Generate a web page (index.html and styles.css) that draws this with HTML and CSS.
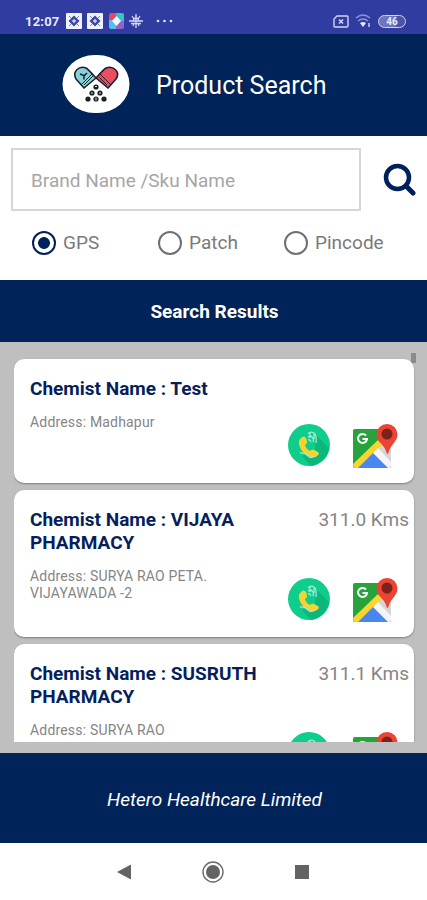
FILE: index.html
```html
<!DOCTYPE html>
<html lang="en">
<head>
    <meta charset="UTF-8">
    <meta name="viewport" content="width=device-width, initial-scale=1.0">
    <title>Product Search</title>
    <link rel="stylesheet" href="styles.css">
</head>
<body>
    <!-- shared icons -->
    <svg class="defs" width="0" height="0">
        <symbol id="app" viewBox="0 0 16 16">
            <rect width="16" height="16" rx="1" fill="#f1f2ff"/>
            <path d="M8 2.5L13.5 8L8 13.5L2.5 8Z" fill="#3a459f"/>
            <path d="M3 3l2 2M13 3l-2 2M3 13l2-2M13 13l-2-2" stroke="#7780c4"/>
            <path d="M8 5.5L9 7L10.5 8L9 9L8 10.5L7 9L5.5 8L7 7Z" fill="#cbd0f4"/>
        </symbol>
        <symbol id="call" viewBox="0 0 42 42">
            <circle cx="21" cy="21" r="21" fill="#0fce8b"/>
            <path d="M27 10L41 24A21 21 0 0 1 23 42L14 32L27 27Z" fill="#0cb77c"/>
            <path d="M13 14q3-3 5 0l1 4q0 2-2 3q1 4 5 6q2-2 4-1l4 2q2 2-1 4q-4 3-9 0q-8-5-9-12q-.5-4 2-6z" fill="#f8d32f"/>
            <path d="M20 10q2-3 6-1q3 2 2 10M20 13q3-2 5 1q1 2 0 4M20 16q2-1 3 2M22 9v5M26 10v5" fill="none" stroke="#a5eadb" stroke-width="1.3"/>
            <path d="M12 29q5-1 8 3q2 3 6 0" fill="none" stroke="#a5eadb" stroke-width="1.3"/>
        </symbol>
        <symbol id="map" viewBox="0 0 46 46">
            <path d="M3 6h36v39H3a2 2 0 0 1-2-2V8a2 2 0 0 1 2-2z" fill="#d5d5d8"/>
            <path d="M3 6h28l-3 13L2 45q-1-1-1-3V8q0-2 2-2z" fill="#27a33c"/>
            <path d="M26 17l4 5L6 45H3q-2-1-2-4z" fill="#fbd52d"/>
            <path d="M22 29L37 45H6z" fill="#4986ed"/>
            <path d="M26 25l13 14v4l-2 2h-1L21 30z" fill="#f5f5f6"/>
            <path d="M14 12.5a4.5 4.5 0 1 0 1 3.5h-4.5" fill="none" stroke="#fff" stroke-width="2"/>
            <path d="M35 1a10.500 10.500 0 0 1 10.500 10.500c0 7-7 10-9 18q-1 3-2 0c-2-8-10-11-10-18A10.500 10.500 0 0 1 35 1z" fill="#eb4435"/>
            <circle cx="35" cy="11" r="5.500" fill="#7c211d"/>
        </symbol>
    </svg>

    <div class="status">
        <span class="time">12:07</span>
        <svg width="16" height="16"><use href="#app"/></svg>
        <svg width="16" height="16"><use href="#app"/></svg>
        <svg width="15" height="16" viewBox="0 0 15 16">
            <path d="M2 0h6v8H0V2q0-2 2-2z" fill="#e9475d"/>
            <path d="M7 0h6q2 0 2 2v7H7z" fill="#32c7c0"/>
            <path d="M0 7h8v9H2q-2 0-2-2z" fill="#50c2e8"/>
            <path d="M7 8h8v6q0 2-2 2H7z" fill="#9361ce"/>
            <path d="M7.5 3l4.5 5-4.5 5L3 8z" fill="#f5f4ff"/>
        </svg>
        <svg width="14" height="14" viewBox="0 0 14 14" fill="none" stroke="#d5d8f5" stroke-width="1.3">
            <path d="M7 0v14M0 7h14M3 2l2 3M11 2l-2 3M4 12l1-3M10 12l-1-3M2 9.5h10"/>
            <path d="M4.500 7q0-3 2.500-3t2.500 3"/>
        </svg>
        <svg class="more" width="17" height="4" viewBox="0 0 17 4" fill="#dfe2ff">
            <circle cx="2" cy="2" r="1.3"/><circle cx="8.5" cy="2" r="1.3"/><circle cx="15" cy="2" r="1.3"/>
        </svg>
        <div class="status-right">
            <svg width="16" height="13" viewBox="0 0 16 13" fill="none" stroke="#cfd3f5" stroke-width="1.4">
                <path d="M4 1h10q1 0 1 1v9q0 1-1 1H2q-1 0-1-1V4z"/>
                <path d="M6 4.500l4 4M10 4.500l-4 4" stroke-width="1.700"/>
            </svg>
            <svg width="17" height="14" viewBox="0 0 17 14" fill="none">
                <path d="M1 4q7-6 14 0M3 7q5-4 10 0" stroke="#8d94d5" stroke-width="1.500"/>
                <path d="M5 9q3-2 6 0l-3 4z" fill="#e8eaff"/>
                <path d="M14 9v4" stroke="#cfd3f5" stroke-width="1.500"/>
            </svg>
            <span class="battery">46</span>
        </div>
    </div>

    <header class="header">
        <svg class="logo" width="68" height="60" viewBox="0 0 68 60">
            <rect x=".5" y="1" width="67" height="58" rx="32" ry="29" fill="#fff"/>
            <g stroke="#18202a" stroke-width="1.500">
                <path d="M22 34L14 25C10 18 17 11 24 14Q26 15 34 24z" fill="#86d2db"/>
                <path d="M46 34L54 25C59 18 51 11 44 14Q42 15 34 24z" fill="#ee4c60"/>
                <path d="M19 31l11-11M22 31l9-9M38 20l11 11M37 23l8 8" fill="none" stroke-width="1"/>
                <path d="M18 20l4 1.500v4M22 22l3-3" fill="none"/>
            </g>
            <g fill="#182028">
                <circle cx="34" cy="33" r="2.600"/><circle cx="30" cy="39" r="2.600"/><circle cx="38" cy="39" r="2.600"/>
                <circle cx="26" cy="45" r="2.600"/><circle cx="34" cy="45" r="2.600"/><circle cx="42" cy="45" r="2.600"/>
            </g>
            <path d="M33 32.500h2M29 39h2M37 39h2M34 43.500v3" stroke="#ddd"/>
        </svg>
        <h1 class="title">Product Search</h1>
    </header>

    <section class="search">
        <div class="search-row">
            <input class="search-input" type="text" placeholder="Brand Name /Sku Name">
            <svg width="33" height="33" viewBox="0 0 33 33" fill="none" stroke="#00205b">
                <circle cx="14.5" cy="14.5" r="11.5" stroke-width="4.5"/>
                <path d="M23 23l7 7" stroke-width="5" stroke-linecap="round"/>
            </svg>
        </div>
        <div class="radios">
            <label class="radio"><input type="radio" name="by" checked>GPS</label>
            <label class="radio"><input type="radio" name="by">Patch</label>
            <label class="radio"><input type="radio" name="by">Pincode</label>
        </div>
    </section>

    <h2 class="results-title">Search Results</h2>

    <main class="results">
        <div class="scrollbar"></div>
        <div class="list">
            <article class="card card-short">
                <div class="card-top">
                    <h3 class="name">Chemist Name : Test</h3>
                </div>
                <p class="address">Address: Madhapur</p>
                <div class="actions">
                    <svg class="call" width="42" height="42"><use href="#call"/></svg>
                    <svg width="46" height="46"><use href="#map"/></svg>
                </div>
            </article>
            <article class="card">
                <div class="card-top">
                    <h3 class="name">Chemist Name : VIJAYA<br>PHARMACY</h3>
                    <span class="distance">311.0 Kms</span>
                </div>
                <p class="address">Address: SURYA RAO PETA.<br>VIJAYAWADA -2</p>
                <div class="actions">
                    <svg class="call" width="42" height="42"><use href="#call"/></svg>
                    <svg width="46" height="46"><use href="#map"/></svg>
                </div>
            </article>
            <article class="card">
                <div class="card-top">
                    <h3 class="name">Chemist Name : SUSRUTH<br>PHARMACY</h3>
                    <span class="distance">311.1 Kms</span>
                </div>
                <p class="address">Address: SURYA RAO</p>
                <div class="actions">
                    <svg class="call" width="42" height="42"><use href="#call"/></svg>
                    <svg width="46" height="46"><use href="#map"/></svg>
                </div>
            </article>
        </div>
    </main>

    <footer class="footer">Hetero Healthcare Limited</footer>

    <nav class="nav">
        <svg width="14" height="16" viewBox="0 0 14 16"><path d="M14 .5v15L0 8z" fill="#636363"/></svg>
        <svg width="22" height="22" viewBox="0 0 22 22">
            <circle cx="11" cy="11" r="10" fill="none" stroke="#6a6a6a" stroke-width="1.4"/>
            <circle cx="11" cy="11" r="7" fill="#636363"/>
        </svg>
        <svg width="14" height="14"><rect width="14" height="14" fill="#636363"/></svg>
    </nav>
</body>
</html>
```

FILE: styles.css
```css
* {
    box-sizing: border-box;
}
body {
    margin: 0;
    width: 427px;
    height: 900px;
    overflow: hidden;
    display: flex;
    flex-direction: column;
    background: #fff;
    font-family: Roboto, sans-serif;
}
h1, h2, h3, p {
    margin: 0;
}
svg {
    display: block;
    flex-shrink: 0;
}
.defs {
    position: absolute;
}
.status {
    height: 34px;
    flex-shrink: 0;
    display: flex;
    align-items: center;
    gap: 5.5px;
    padding: 8px 21px 0 25px;
    background: #303c9f;
    color: #e8eaff;
}
.time {
    width: 35px;
    font-size: 13px;
    font-weight: 700;
    letter-spacing: 0.2px;
    white-space: nowrap;
}
.more {
    margin-left: 7px;
}
.status-right {
    margin-left: auto;
    display: flex;
    align-items: center;
    gap: 6px;
}
.battery {
    width: 28px;
    height: 13px;
    border: 1.5px solid #cfd3f5;
    border-radius: 7px;
    background: linear-gradient(90deg, #6d75bd 65%, #4954aa 65%);
    font-size: 10px;
    font-weight: 700;
    line-height: 11px;
    text-align: center;
}
.header {
    height: 102px;
    flex-shrink: 0;
    display: flex;
    align-items: center;
    gap: 26px;
    padding: 0 0 2px 62px;
    background: #002359;
}
.title {
    padding-top: 4px;
    font-size: 25px;
    font-weight: 400;
    line-height: 30px;
    color: #fff;
}
.search {
    height: 144px;
    flex-shrink: 0;
    padding: 12px 11px 0;
}
.search-row {
    display: flex;
    align-items: center;
    justify-content: space-between;
}
.search-input {
    width: 350px;
    height: 63px;
    padding: 2px 18px 0;
    border: 2px solid #d6d6d6;
    border-radius: 0;
    background: #fff;
    font-family: Roboto, sans-serif;
    font-size: 19px;
}
.search-input::placeholder {
    color: #a6a6a6;
}
.radios {
    display: grid;
    grid-template-columns: 126px 126px auto;
    padding: 19px 0 0 21px;
}
.radio {
    display: flex;
    align-items: center;
    gap: 7px;
    font-size: 19px;
    line-height: 26px;
    color: #7a7a7a;
}
.radio input {
    appearance: none;
    margin: 0;
    width: 24px;
    height: 24px;
    border: 2px solid #707070;
    border-radius: 50%;
}
.radio input:checked {
    border-color: #00205b;
    background: radial-gradient(circle, #00205b 5.5px, #fff 6.3px);
}
.results-title {
    height: 62px;
    flex-shrink: 0;
    padding-left: 2px;
    background: #002359;
    color: #fff;
    font-size: 19px;
    font-weight: 700;
    line-height: 63px;
    text-align: center;
}
.results {
    position: relative;
    height: 411px;
    flex-shrink: 0;
    padding: 11px 8px 11px 14px;
    background: #bfbfbf;
}
.scrollbar {
    position: absolute;
    top: 11px;
    right: 11px;
    width: 5px;
    height: 10px;
    background: #8b8b8b;
}
.list {
    height: 389px;
    overflow: hidden;
    padding-top: 6px;
}
.card {
    position: relative;
    width: 400px;
    height: 147px;
    margin-bottom: 7px;
    padding: 18px 5px 0 16px;
    border-radius: 10px;
    background: #fff;
    box-shadow: 0 1px 2px rgba(0, 0, 0, 0.35);
}
.card-short {
    height: 124px;
}
.card-top {
    display: flex;
    justify-content: space-between;
}
.name {
    font-size: 19px;
    font-weight: 700;
    line-height: 23px;
    color: #061f5c;
}
.distance {
    font-size: 19px;
    line-height: 23px;
    color: #858585;
}
.address {
    margin-top: 14px;
    font-size: 14px;
    line-height: 16.5px;
    letter-spacing: 0.18px;
    color: #858585;
}
.actions {
    position: absolute;
    right: 16px;
    bottom: 14px;
    display: flex;
    align-items: flex-start;
    gap: 22px;
}
.call {
    margin-top: 1px;
}
.footer {
    height: 90px;
    flex-shrink: 0;
    padding-left: 2px;
    background: #002359;
    color: #fff;
    font-size: 19px;
    font-style: italic;
    line-height: 93px;
    text-align: center;
}
.nav {
    height: 57px;
    display: flex;
    align-items: center;
    justify-content: space-between;
    padding: 1px 118px 0 117px;
    background: #fff;
}
```
